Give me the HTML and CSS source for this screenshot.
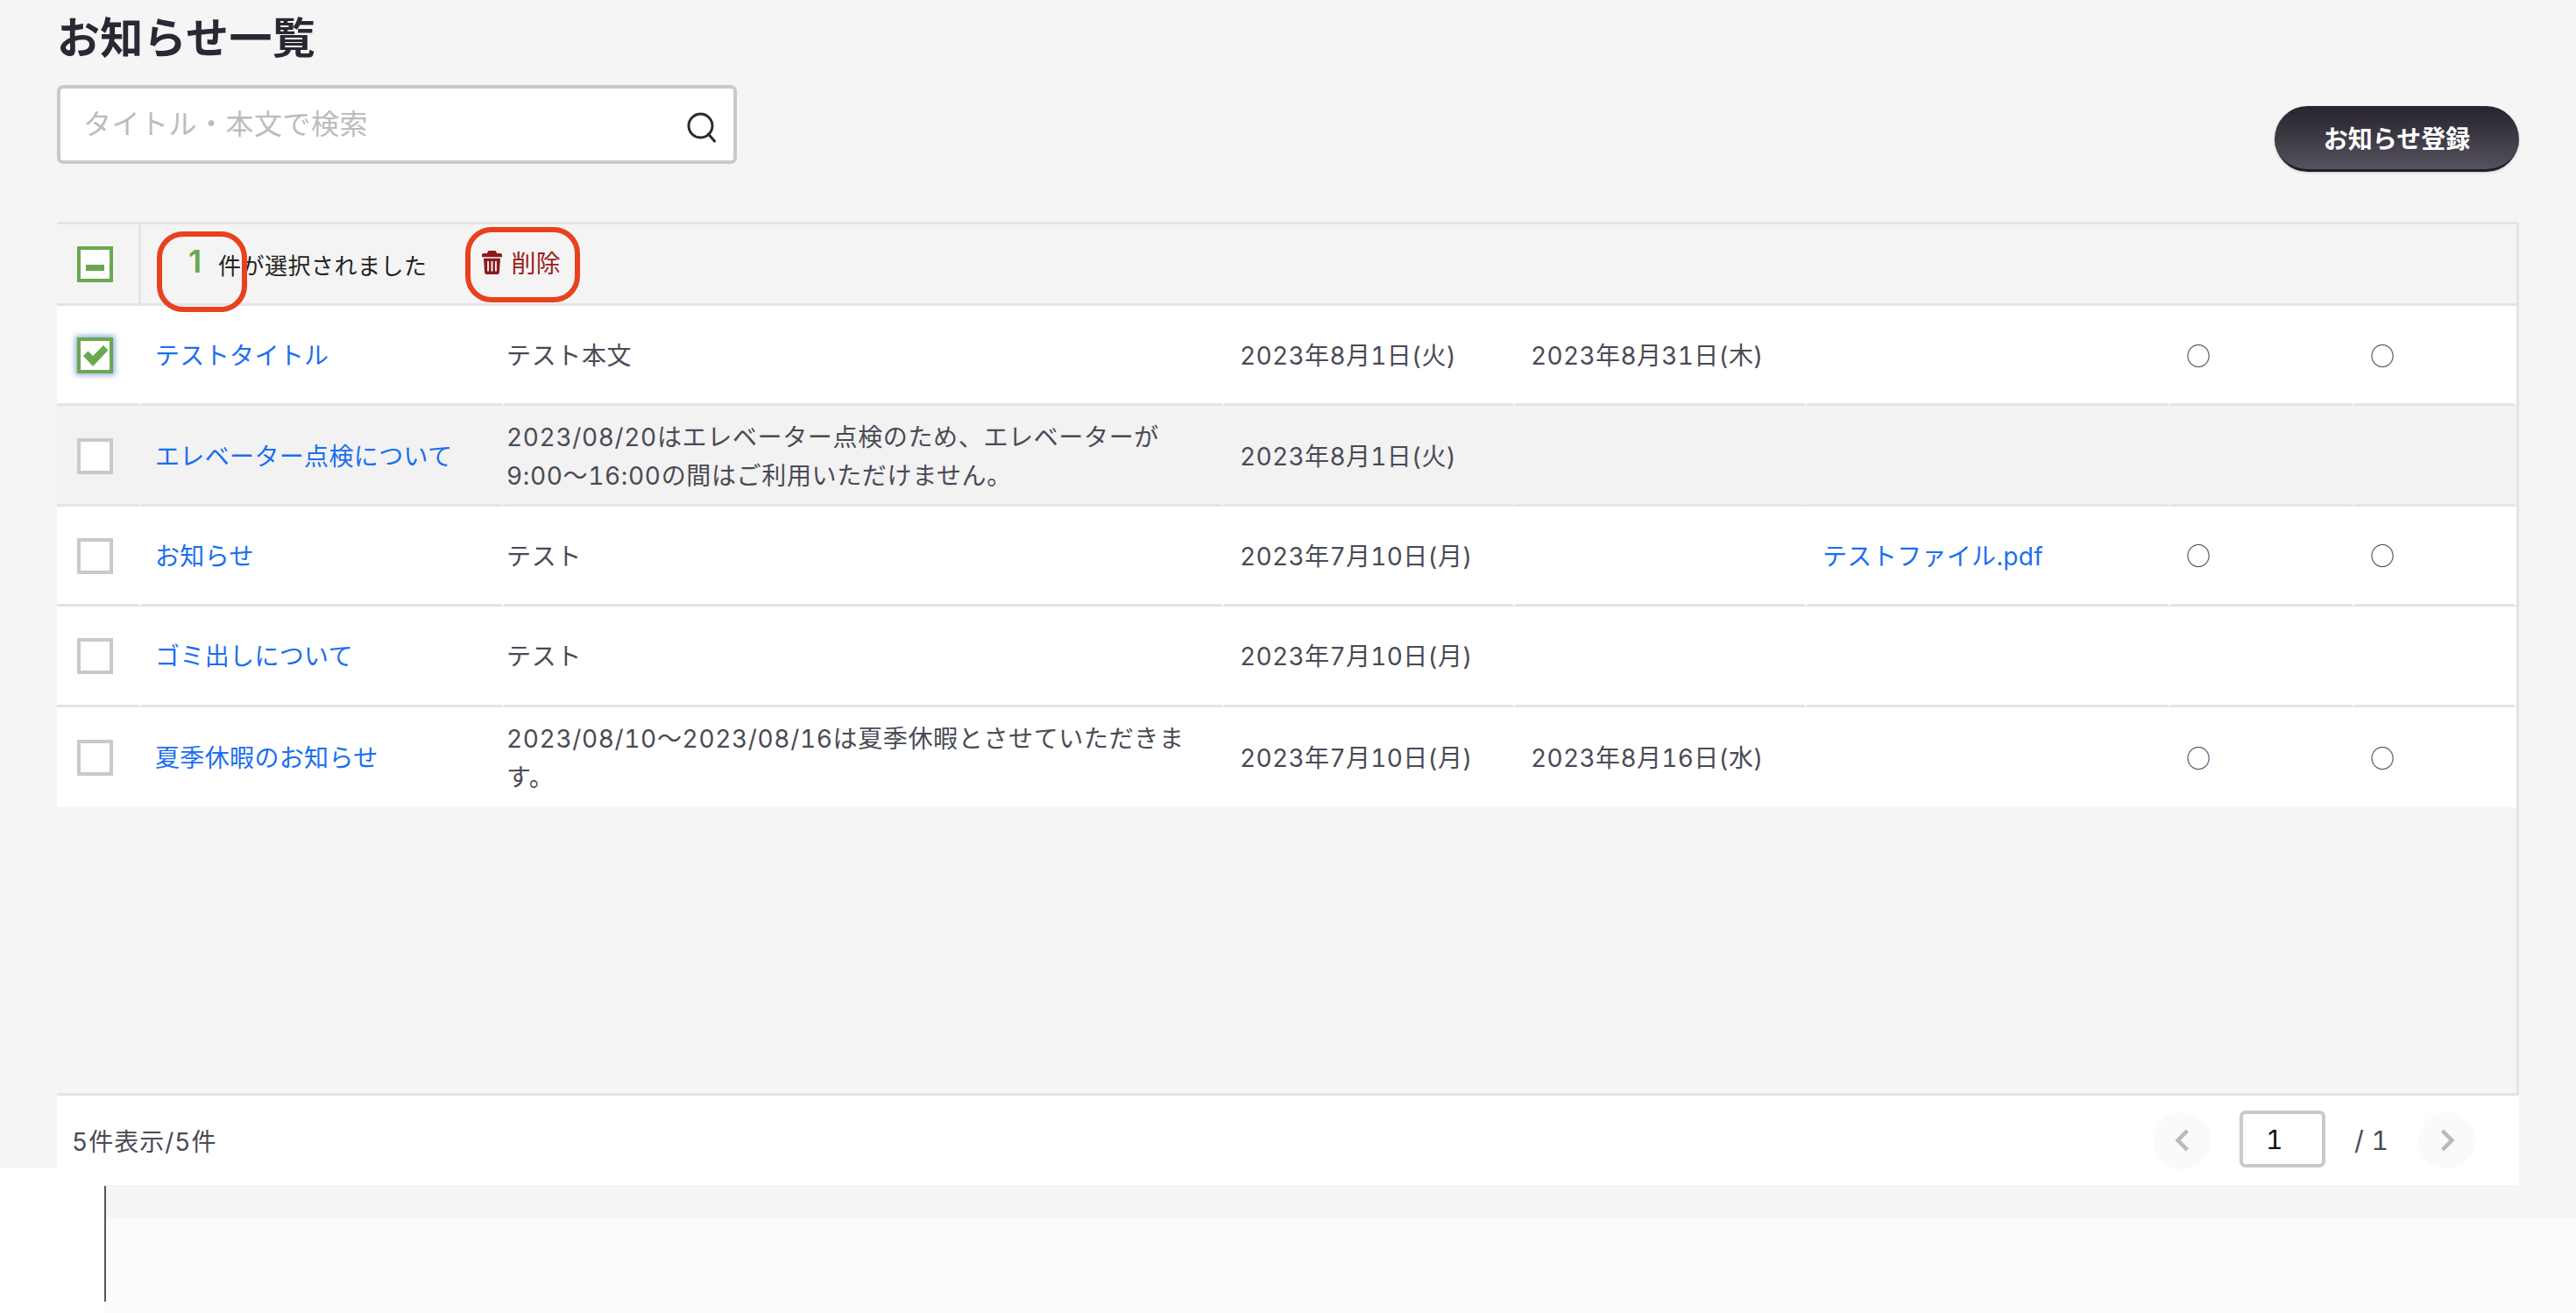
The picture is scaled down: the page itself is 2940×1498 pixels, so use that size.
FILE: index.html
```html
<!DOCTYPE html>
<html lang="ja">
<head>
<meta charset="utf-8">
<title>お知らせ一覧</title>
<link rel="stylesheet" href="styles.css">
</head>
<body>
<div class="upper">
  <h1 class="title">お知らせ一覧</h1>
  <div class="toolbar">
    <div class="search">
      <input class="search-input" type="text" placeholder="タイトル・本文で検索">
      <svg class="search-icon" viewBox="0 0 36 36" width="36" height="36"><circle cx="16.5" cy="16.5" r="13.5" fill="none" stroke="#2b2a33" stroke-width="3"/><path d="M25.5 26l7 8" fill="none" stroke="#2b2a33" stroke-width="3" stroke-linecap="round"/></svg>
    </div>
    <button class="primary-btn" type="button">お知らせ登録</button>
  </div>
  <div class="table-wrap">
    <table class="list">
      <colgroup>
        <col class="c-check"><col class="c-title"><col class="c-body"><col class="c-date"><col class="c-date2"><col class="c-file"><col class="c-flag"><col class="c-flag2">
      </colgroup>
      <thead>
        <tr class="head-row">
          <th class="cell-check head-check"><span class="box box-on"><span class="minus"></span></span></th>
          <th colspan="7" class="head-main">
            <div class="selection">
              <span class="count">1</span><span class="count-label">件が選択されました</span>
              <span class="del"><svg class="trash" viewBox="0 0 24 28" width="23" height="27"><path fill="#8b1a1a" d="M8.5 0h7a1.5 1.5 0 0 1 1.5 1.2L17.6 3H22a2 2 0 0 1 2 2v2.4H0V5a2 2 0 0 1 2-2h4.4L7 1.2A1.5 1.5 0 0 1 8.5 0zM2 9h20l-1.3 17a2.2 2.2 0 0 1-2.2 2h-13a2.2 2.2 0 0 1-2.2-2zm4.4 3.5v12h2v-12zm4.6 0v12h2v-12zm4.6 0v12h2v-12z"/></svg><span class="del-label">削除</span></span>
              <span class="mark mark-count"></span>
              <span class="mark mark-del"></span>
            </div>
          </th>
        </tr>
      </thead>
      <tbody>
        <tr>
          <td class="cell-check"><span class="box box-on box-focus"><svg viewBox="0 0 30 26" width="30" height="26"><path fill="#6aa84f" d="M1 13l5.5-5.5 5.5 5.5L24 1l5.5 5.5L12 25z"/></svg></span></td>
          <td class="cell-title"><a class="link" href="#">テストタイトル</a></td>
          <td class="cell-body">テスト本文</td>
          <td>2023年8月1日(火)</td>
          <td>2023年8月31日(木)</td>
          <td></td>
          <td class="cell-flag">○</td>
          <td class="cell-flag">○</td>
        </tr>
        <tr class="row-hover">
          <td class="cell-check"><span class="box"></span></td>
          <td class="cell-title"><a class="link" href="#">エレベーター点検について</a></td>
          <td class="cell-body">2023/08/20はエレベーター点検のため、エレベーターが9:00〜16:00の間はご利用いただけません。</td>
          <td>2023年8月1日(火)</td>
          <td></td>
          <td></td>
          <td></td>
          <td></td>
        </tr>
        <tr>
          <td class="cell-check"><span class="box"></span></td>
          <td class="cell-title"><a class="link" href="#">お知らせ</a></td>
          <td class="cell-body">テスト</td>
          <td>2023年7月10日(月)</td>
          <td></td>
          <td><a class="link" href="#">テストファイル.pdf</a></td>
          <td class="cell-flag">○</td>
          <td class="cell-flag">○</td>
        </tr>
        <tr>
          <td class="cell-check"><span class="box"></span></td>
          <td class="cell-title"><a class="link" href="#">ゴミ出しについて</a></td>
          <td class="cell-body">テスト</td>
          <td>2023年7月10日(月)</td>
          <td></td>
          <td></td>
          <td></td>
          <td></td>
        </tr>
        <tr class="row-last">
          <td class="cell-check"><span class="box"></span></td>
          <td class="cell-title"><a class="link" href="#">夏季休暇のお知らせ</a></td>
          <td class="cell-body">2023/08/10〜2023/08/16は夏季休暇とさせていただきます。</td>
          <td>2023年7月10日(月)</td>
          <td>2023年8月16日(水)</td>
          <td></td>
          <td class="cell-flag">○</td>
          <td class="cell-flag">○</td>
        </tr>
      </tbody>
    </table>
  </div>
  <div class="pager-bar">
    <span class="total">5件表示/5件</span>
    <div class="pager">
      <span class="page-btn"><svg viewBox="0 0 20 28" width="18" height="26"><path d="M16 2L4 14l12 12" fill="none" stroke="#b9b9b9" stroke-width="5"/></svg></span>
      <input class="page-input" type="text" value="1">
      <span class="page-total">/ 1</span>
      <span class="page-btn"><svg viewBox="0 0 20 28" width="18" height="26"><path d="M4 2l12 12L4 26" fill="none" stroke="#b9b9b9" stroke-width="5"/></svg></span>
    </div>
  </div>
</div>
<div class="lower">
  <div class="lower-band"></div>
  <div class="lower-fill"></div>
</div>
</body>
</html>
```
FILE: styles.css
```css
* { box-sizing: border-box; }
html, body { margin: 0; height: 1498px; overflow: hidden; background: #fff; }
body { font-family: Inter, "Noto Sans CJK JP", "Noto Sans", sans-serif; color: #4a4a55; font-size: 28px; letter-spacing: .35px; font-variant-numeric: tabular-nums; }

.upper { height: 1333px; background: #f5f5f5; padding: 0 65px; position: relative; z-index: 1; }
.title { margin: 0; height: 97px; padding-top: 8px; font-size: 49px; line-height: 72px; font-weight: 700; color: #2a2833; }

.toolbar { display: flex; justify-content: space-between; align-items: flex-start; height: 156px; }
.search { position: relative; width: 776px; height: 90px; }
.search-input { width: 100%; height: 100%; border: 4px solid #c9c9cd; border-radius: 7px; background: #fff; padding: 0 70px 2px 26px; font: inherit; font-size: 32px; letter-spacing: .5px; color: #333; outline: none; }
.search-input::placeholder { color: #bcbcbc; opacity: 1; }
.search-icon { position: absolute; right: 22px; top: 30px; }
.primary-btn { margin-top: 24px; width: 279px; height: 75px; border: 0; border-bottom: 3px solid #1f1d26; border-radius: 38px; background: linear-gradient(#26232c, #55525d); color: #fff; font: inherit; font-weight: 700; box-shadow: 0 1px 3px rgba(0,0,0,.2); }

.table-wrap { height: 997px; border-top: 3px solid #e3e4ea; border-right: 3px solid #e3e4ea; border-bottom: 3px solid #e3e4ea; }
.list { width: 100%; table-layout: fixed; border-collapse: separate; border-spacing: 0; }
.c-check { width: 96px; }
.c-title { width: 414px; }
.c-body { width: 822px; }
.c-date { width: 332px; }
.c-date2 { width: 333px; }
.c-file { width: 415px; }
.c-flag { width: 210px; }

.head-row th { height: 93px; background: #f4f4f4; border-bottom: 3px solid #e3e4ea; padding: 0; font-weight: 400; text-align: left; }
.head-check { border-right: 3px solid #e3e4ea; }
.head-main { position: relative; }

td { height: 114.4px; background: #fff; border-bottom: 3px solid #e3e4ea; border-right: 3px solid transparent; padding: 3px 18px 0; line-height: 44px; vertical-align: middle; }
.row-hover td { background: #f2f2f2; }
.row-last td { border-bottom: 0; }
td.cell-check { padding: 2px 0 0 23px; line-height: 0; }
th.cell-check { padding-left: 23px; line-height: 0; }
td.cell-title { padding-left: 16px; }
td.cell-body { padding: 3px 6px 0 3px; letter-spacing: .65px; }
td.cell-flag { padding-top: 0; font-family: "Noto Sans CJK JP", sans-serif; }

.link { color: #1a6ff0; text-decoration: none; }

.box { display: inline-flex; align-items: center; justify-content: center; width: 41px; height: 41px; border: 4px solid #c9c9cb; background: #fff; }
.box-on { border-color: #6aa84f; }
.box-focus { box-shadow: 0 0 6px 2px rgba(60, 100, 200, .55); }
.minus { width: 21px; height: 7px; margin-top: 8px; background: #6aa84f; }

.selection { display: flex; align-items: center; position: relative; padding-left: 54px; height: 90px; }
.count { font-size: 36px; font-weight: 600; color: #6aa84f; width: 34px; line-height: 1; margin-top: -6px; font-variant-numeric: normal; }
.count-label { font-size: 26px; letter-spacing: .5px; color: #222; }
.del { display: inline-flex; align-items: center; margin-left: 62px; color: #9b2020; margin-top: -4px; }
.trash { margin-right: 11px; }
.mark { position: absolute; border: 6px solid #e8411e; border-radius: 30px; }
.mark-count { left: 18px; top: 8px; width: 103px; height: 92px; }
.mark-del { left: 370px; top: 3px; width: 131px; height: 86px; }

.pager-bar { position: absolute; left: 65px; right: 65px; top: 1250px; height: 102px; display: flex; align-items: center; justify-content: space-between; background: #fff; padding: 0 50px 0 17px; }
.total { letter-spacing: 1px; }
.pager { display: flex; align-items: center; }
.page-btn { display: flex; align-items: center; justify-content: center; width: 65px; height: 65px; border-radius: 50%; background: #fafafa; }
.page-input { width: 98px; height: 65px; margin-left: 33px; margin-top: -3px; border: 4px solid #c9c9c9; border-radius: 7px; padding: 0 0 0 26px; font: inherit; font-size: 30px; color: #111; background: #fff; outline: none; }
.page-total { width: 106px; padding-left: 33px; font-size: 30px; }

.lower { height: 165px; margin-left: 119px; position: relative; }
.lower::before { content: ""; position: absolute; left: 0; top: 20px; width: 2px; height: 132px; background: #55555f; }
.lower-band { height: 56px; background: #f5f5f5; }
.lower-fill { height: 109px; background: #fbfbfb; }
```
